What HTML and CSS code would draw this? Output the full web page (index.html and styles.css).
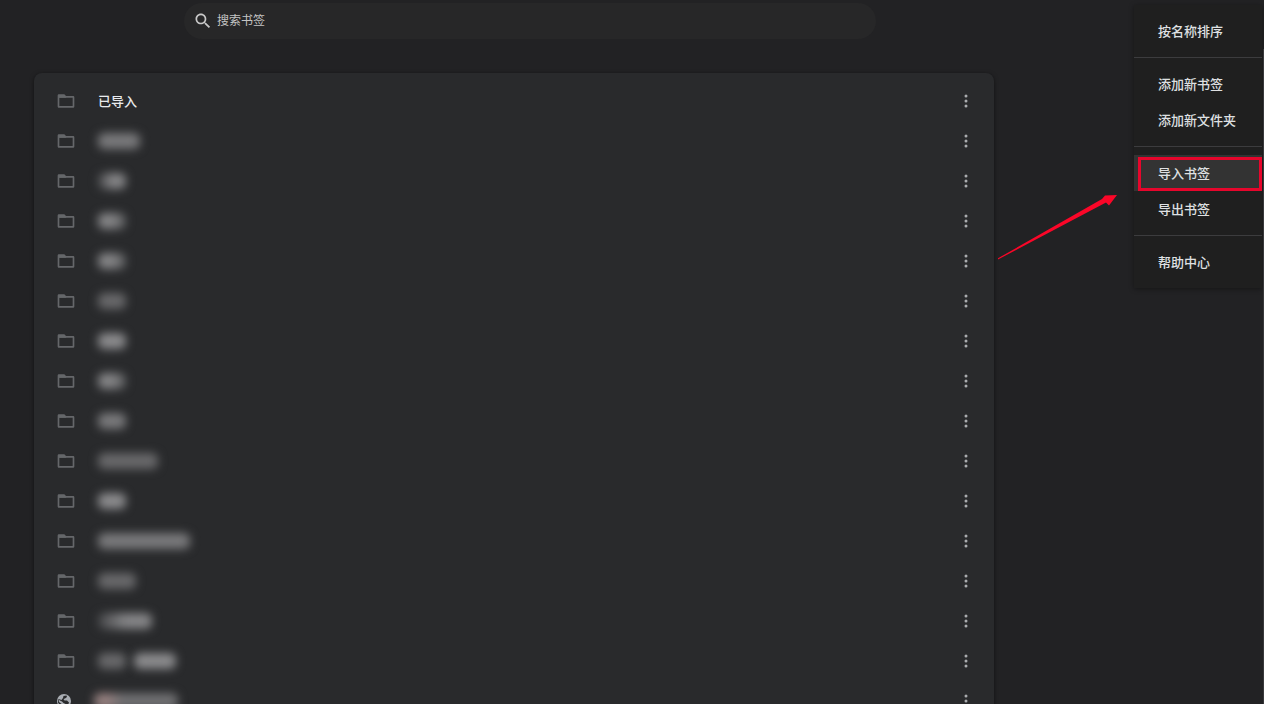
FILE: index.html
```
<!DOCTYPE html>
<html lang="zh-CN">
<head>
    <meta charset="UTF-8">
    <meta name="viewport" content="width=device-width, initial-scale=1.0">
    <title>书签</title>
    <link rel="stylesheet" href="styles.css">
</head>
<body>
    <!-- 图标 -->
    <svg class="icon-defs" aria-hidden="true">
        <symbol id="folder" viewBox="0 0 24 24">
            <path d="M4 6v12h16V8H4zM3.500 4H10l2 2h8.500c.8 0 1.500.7 1.500 1.500v11c0 .8-.7 1.500-1.500 1.500h-17c-.8 0-1.500-.7-1.500-1.500v-13C2 4.700 2.700 4 3.500 4z" fill-rule="evenodd"/>
            <path d="M3 5h7.500l2 3H3z"/>
        </symbol>
        <symbol id="more" viewBox="0 0 20 20">
            <circle cx="10" cy="5" r="1.500"/>
            <circle cx="10" cy="10" r="1.500"/>
            <circle cx="10" cy="15" r="1.500"/>
        </symbol>
        <symbol id="search" viewBox="0 0 24 24">
            <path d="M15.5 14h-.79l-.28-.27C15.41 12.59 16 11.11 16 9.5 16 5.91 13.09 3 9.5 3S3 5.91 3 9.5 5.91 16 9.5 16c1.61 0 3.09-.59 4.23-1.57l.27.28v.79l5 4.99L20.490 19l-4.990-5zm-6 0C7.01 14 5 11.99 5 9.5S7.01 5 9.5 5 14 7.01 14 9.5 11.99 14 9.5 14z"/>
        </symbol>
        <symbol id="globe" viewBox="0 0 16 16">
            <circle cx="8" cy="8" r="7"/>
            <path class="globe-land" d="M7.500 3L10.500 2.500 11 4 9 5.500 7.500 6 8.500 7.500 11 7.500 13 9.500 12 12 10 13.500 9.500 11 7.500 10 6 8.500 3 7 3 9 5 10.500 7 12 6.500 13.500 4 12.500 2 9.500 2.500 6 5.500 7 7 5z"/>
        </symbol>
    </svg>

    <header class="toolbar">
        <label class="search-box">
            <svg class="search-icon" aria-hidden="true"><use href="#search"/></svg>
            <input type="text" placeholder="搜索书签" aria-label="搜索书签">
        </label>
    </header>

    <!-- 书签列表 -->
    <main>
        <ul class="bookmark-list">
            <li class="row">
                <svg class="icon"><use href="#folder"/></svg>
                <a class="name" href="#">已导入</a>
                <button class="more-btn" aria-label="更多操作"><svg><use href="#more"/></svg></button>
            </li>
            <li class="row">
                <svg class="icon"><use href="#folder"/></svg>
                <a class="name" href="#" aria-label="文件夹"><span class="mask w-3"></span></a>
                <button class="more-btn" aria-label="更多操作"><svg><use href="#more"/></svg></button>
            </li>
            <li class="row">
                <svg class="icon"><use href="#folder"/></svg>
                <a class="name" href="#" aria-label="文件夹"><span class="mask w-1 fade-in"></span></a>
                <button class="more-btn" aria-label="更多操作"><svg><use href="#more"/></svg></button>
            </li>
            <li class="row">
                <svg class="icon"><use href="#folder"/></svg>
                <a class="name" href="#" aria-label="文件夹"><span class="mask w-1 fade-out"></span></a>
                <button class="more-btn" aria-label="更多操作"><svg><use href="#more"/></svg></button>
            </li>
            <li class="row">
                <svg class="icon"><use href="#folder"/></svg>
                <a class="name" href="#" aria-label="文件夹"><span class="mask w-1 fade-out"></span></a>
                <button class="more-btn" aria-label="更多操作"><svg><use href="#more"/></svg></button>
            </li>
            <li class="row">
                <svg class="icon"><use href="#folder"/></svg>
                <a class="name" href="#" aria-label="文件夹"><span class="mask w-1 dim"></span></a>
                <button class="more-btn" aria-label="更多操作"><svg><use href="#more"/></svg></button>
            </li>
            <li class="row">
                <svg class="icon"><use href="#folder"/></svg>
                <a class="name" href="#" aria-label="文件夹"><span class="mask w-1 bright"></span></a>
                <button class="more-btn" aria-label="更多操作"><svg><use href="#more"/></svg></button>
            </li>
            <li class="row">
                <svg class="icon"><use href="#folder"/></svg>
                <a class="name" href="#" aria-label="文件夹"><span class="mask w-1 fade-out"></span></a>
                <button class="more-btn" aria-label="更多操作"><svg><use href="#more"/></svg></button>
            </li>
            <li class="row">
                <svg class="icon"><use href="#folder"/></svg>
                <a class="name" href="#" aria-label="文件夹"><span class="mask w-1"></span></a>
                <button class="more-btn" aria-label="更多操作"><svg><use href="#more"/></svg></button>
            </li>
            <li class="row">
                <svg class="icon"><use href="#folder"/></svg>
                <a class="name" href="#" aria-label="文件夹"><span class="mask w-5 dim"></span></a>
                <button class="more-btn" aria-label="更多操作"><svg><use href="#more"/></svg></button>
            </li>
            <li class="row">
                <svg class="icon"><use href="#folder"/></svg>
                <a class="name" href="#" aria-label="文件夹"><span class="mask w-1 bright"></span></a>
                <button class="more-btn" aria-label="更多操作"><svg><use href="#more"/></svg></button>
            </li>
            <li class="row">
                <svg class="icon"><use href="#folder"/></svg>
                <a class="name" href="#" aria-label="文件夹"><span class="mask w-7"></span></a>
                <button class="more-btn" aria-label="更多操作"><svg><use href="#more"/></svg></button>
            </li>
            <li class="row">
                <svg class="icon"><use href="#folder"/></svg>
                <a class="name" href="#" aria-label="文件夹"><span class="mask w-2 dim"></span></a>
                <button class="more-btn" aria-label="更多操作"><svg><use href="#more"/></svg></button>
            </li>
            <li class="row">
                <svg class="icon"><use href="#folder"/></svg>
                <a class="name" href="#" aria-label="文件夹"><span class="mask w-4 fade-in"></span></a>
                <button class="more-btn" aria-label="更多操作"><svg><use href="#more"/></svg></button>
            </li>
            <li class="row">
                <svg class="icon"><use href="#folder"/></svg>
                <a class="name" href="#" aria-label="文件夹"><span class="mask w-1 dim"></span><span class="mask w-3 bright"></span></a>
                <button class="more-btn" aria-label="更多操作"><svg><use href="#more"/></svg></button>
            </li>
            <li class="row">
                <svg class="icon icon-site"><use href="#globe"/></svg>
                <a class="name" href="#" aria-label="书签"><span class="mask w-6 site"></span></a>
                <button class="more-btn" aria-label="更多操作"><svg><use href="#more"/></svg></button>
            </li>
        </ul>
    </main>

    <!-- 右上角菜单 -->
    <nav class="menu" aria-label="菜单">
        <button>按名称排序</button>
        <hr>
        <button>添加新书签</button>
        <button>添加新文件夹</button>
        <hr>
        <button class="active">导入书签</button>
        <button>导出书签</button>
        <hr>
        <button>帮助中心</button>
    </nav>
    <div class="scroll-edge"></div>

    <!-- 指向“导入书签”的箭头 -->
    <svg class="arrow" viewBox="0 0 120 66" aria-hidden="true">
        <path d="M0 64.300L104 5 107 1.500 119 1 111 11.500 108 8.500 0 65.500z"/>
    </svg>
</body>
</html>
```

FILE: styles.css
```
* {
    box-sizing: border-box;
}

body {
    font-family: "Liberation Sans", "Noto Sans CJK SC", sans-serif;
    font-size: 13px;
    background-color: #222224;
    color: #dfe0e2;
    margin: 0;
    height: 100vh;
    overflow: hidden;
    position: relative;
}

button {
    font: inherit;
    color: inherit;
    background: none;
    border: none;
    padding: 0;
    cursor: pointer;
}

.icon-defs {
    display: none;
}

/* 搜索栏 */
.toolbar {
    padding: 3px 388px 34px 184px;
}

.search-box {
    display: flex;
    align-items: center;
    gap: 4px;
    height: 36px;
    padding: 0 9px;
    border-radius: 18px;
    background-color: #272728;
}

.search-icon {
    width: 20px;
    height: 20px;
    fill: #c8c8c8;
}

.search-box input {
    flex: 1;
    padding: 0;
    border: none;
    outline: none;
    background: none;
    font-family: inherit;
    font-size: 12px;
    color: #e8eaed;
}

.search-box input::placeholder {
    color: #c4c4c4;
}

/* 列表 */
main {
    padding: 0 270px 0 34px;
}

.bookmark-list {
    list-style: none;
    margin: 0;
    padding: 8px 18px 8px 22px;
    max-width: 960px;
    background-color: #292a2c;
    border-radius: 8px;
    box-shadow: 0 1px 4px rgba(0, 0, 0, 0.5);
}

.row {
    display: flex;
    align-items: center;
    height: 40px;
}

.icon {
    width: 20px;
    height: 20px;
    margin-right: 22px;
    fill: #65676a;
}

.icon-site {
    width: 16px;
    height: 16px;
    fill: #a9adb3;
}

.globe-land {
    fill: #292a2c;
}

.name {
    flex: 1;
    display: flex;
    gap: 8px;
    padding-bottom: 2px;
    color: #e8eaed;
    text-decoration: none;
    font-weight: 500;
}

.more-btn {
    width: 20px;
    height: 20px;
}

.more-btn svg {
    display: block;
    width: 20px;
    height: 20px;
    fill: #aaacaf;
}

/* 模糊处理的名称 */
.mask {
    height: 16px;
    margin-top: 2px;
    border-radius: 6px;
    background-color: #79797b;
    filter: blur(5px);
}

.w-1 {
    width: 28px;
}

.w-2 {
    width: 38px;
}

.w-3 {
    width: 42px;
}

.w-4 {
    width: 54px;
}

.w-5 {
    width: 60px;
}

.w-6 {
    width: 84px;
}

.w-7 {
    width: 92px;
}

.dim {
    background-color: #68686a;
}

.bright {
    background-color: #8b8b8d;
}

.fade-in {
    background: linear-gradient(to right, #454648, #858587 50%);
}

.fade-out {
    background: linear-gradient(to right, #858587 50%, #58595b);
}

.site {
    background: linear-gradient(to right, #95807f 14px, #707072 28px);
}

/* 菜单 */
.menu {
    position: absolute;
    top: 5px;
    right: 2px;
    width: 128px;
    padding: 8px 0;
    background-color: #1f1f1f;
    box-shadow: 0 1px 5px rgba(0, 0, 0, 0.4);
}

.menu button {
    display: block;
    width: 100%;
    height: 36px;
    padding: 0 24px 2px;
    text-align: left;
    font-weight: 500;
    white-space: nowrap;
}

.menu hr {
    height: 1px;
    margin: 8px 0;
    border: none;
    background-color: #3c3c3e;
}

.menu .active {
    position: relative;
    background-color: #333333;
}

/* 红色标注框 */
.menu .active::after {
    content: "";
    position: absolute;
    inset: 2px 0 0 4px;
    border: 3px solid #e6062c;
}

.scroll-edge {
    position: absolute;
    top: 49px;
    right: 0;
    bottom: 0;
    width: 1px;
    background-color: #39393b;
}

.arrow {
    position: absolute;
    top: 194px;
    right: 146px;
    width: 120px;
    height: 66px;
    fill: #fb0628;
}
```
